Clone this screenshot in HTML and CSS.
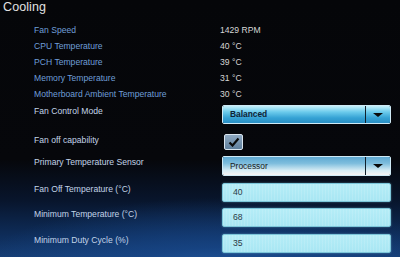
FILE: index.html
```html
<!DOCTYPE html>
<html>
<head>
<meta charset="utf-8">
<link rel="stylesheet" href="styles.css">
</head>
<body>
<div class="screen">
  <h1 class="title">Cooling</h1>
  <div class="form">
    <div class="lbl ro">Fan Speed</div><div class="val">1429 RPM</div>
    <div class="lbl ro">CPU Temperature</div><div class="val">40 °C</div>
    <div class="lbl ro">PCH Temperature</div><div class="val">39 °C</div>
    <div class="lbl ro">Memory Temperature</div><div class="val">31 °C</div>
    <div class="lbl ro">Motherboard Ambient Temperature</div><div class="val">30 °C</div>

    <div class="lbl ed">Fan Control Mode</div>
    <div class="ctl"><div class="select sel-a"><span class="sel-text">Balanced</span><span class="sel-btn"><span class="arrow"></span></span></div></div>

    <div class="lbl ed">Fan off capability</div>
    <div class="ctl"><div class="check"><svg width="12" height="10" viewBox="0 0 12 10"><path d="M1.5 5.5 L4.5 8.5 L10.5 1.5" fill="none" stroke="#0a0a0a" stroke-width="2.2"/></svg></div></div>

    <div class="lbl ed">Primary Temperature Sensor</div>
    <div class="ctl"><div class="select sel-b"><span class="sel-text">Processor</span><span class="sel-btn"><span class="arrow"></span></span></div></div>

    <div class="lbl ed">Fan Off Temperature (°C)</div>
    <div class="ctl"><div class="input">40</div></div>

    <div class="lbl ed">Minimum Temperature (°C)</div>
    <div class="ctl"><div class="input">68</div></div>

    <div class="lbl ed">Minimum Duty Cycle (%)</div>
    <div class="ctl"><div class="input">35</div></div>
  </div>
</div>
</body>
</html>
```

FILE: styles.css
```css
html, body {
  margin: 0;
  padding: 0;
}
body {
  width: 400px;
  height: 257px;
  overflow: hidden;
  font-family: "Liberation Sans", Arial, sans-serif;
  background:
    radial-gradient(ellipse 260px 90px at 55% 112%, rgba(40,100,175,0.95) 0%, rgba(25,75,145,0.6) 45%, rgba(10,30,70,0) 100%),
    linear-gradient(to bottom, #050609 0%, #06070b 62%, #08152c 78%, #0e2d5a 92%, #153c72 100%);
}
.screen {
  position: relative;
  width: 400px;
  height: 257px;
}
.title {
  margin: 0;
  padding: 0 0 0 3px;
  font-size: 12.5px;
  font-weight: normal;
  line-height: 15px;
  color: #e2e2e2;
  letter-spacing: 0.1px;
}
.form {
  display: grid;
  grid-template-columns: 188px 169px;
  grid-template-rows: 16px 16px 16px 16px 16px 29px 22px 27px 25px 26px 26px;
  padding-left: 34px;
  margin-top: 7px;
  font-size: 8.6px;
}
.lbl {
  line-height: 16px;
  white-space: nowrap;
}
.lbl.ro {
  color: #6f9ed8;
}
.lbl.ed {
  color: #c2d4e8;
  line-height: 12px;
  padding-top: 3px;
}
.val {
  color: #d6d6d6;
  line-height: 16px;
  margin-left: -2px;
}
.ctl {
  padding-top: 3px;
}
.select {
  display: flex;
  height: 19px;
  box-sizing: border-box;
  border: 1px solid #cfeaf6;
  border-radius: 2px;
  overflow: hidden;
}
.sel-text {
  flex: 1;
  padding-left: 7px;
  line-height: 17px;
  color: #0e2436;
  font-weight: bold;
  font-size: 8.4px;
}
.sel-btn {
  width: 24px;
  border-left: 1.5px solid #10202c;
  display: flex;
  align-items: center;
  justify-content: center;
}
.sel-a .sel-text, .sel-a .sel-btn {
  background: linear-gradient(to bottom, #c4f0fb 0%, #6ccbec 35%, #35a2d4 70%, #2a8fc4 100%);
}
.sel-b {
  height: 20px;
}
.sel-b .sel-text, .sel-b .sel-btn {
  background: linear-gradient(to bottom, #5fa9d2 0%, #7dbddd 35%, #d6ecf4 75%, #f6f2f2 100%);
}
.sel-b .sel-text {
  line-height: 18px;
  font-weight: normal;
  color: #1a1a22;
}
.arrow {
  width: 0;
  height: 0;
  border-left: 5px solid transparent;
  border-right: 5px solid transparent;
  border-top: 4px solid #0a0a0a;
}
.check {
  width: 19px;
  height: 16px;
  box-sizing: border-box;
  margin-left: 2px;
  border: 1.5px solid #d8e4ee;
  border-radius: 2px;
  background: linear-gradient(to bottom, #8ea8c0, #5f7f9c);
  display: flex;
  align-items: center;
  justify-content: center;
}
.input {
  height: 19px;
  box-sizing: border-box;
  border: 1px solid #7cc6da;
  border-radius: 2px;
  background:
    repeating-linear-gradient(to right, rgba(255,255,255,0.12) 0 1px, rgba(255,255,255,0) 1px 3px),
    linear-gradient(to bottom, #b5edf7, #a8e6f3);
  box-shadow: 0 0 2px rgba(150,220,240,0.5);
  color: #2a3a44;
  padding-left: 10px;
  line-height: 17px;
  font-size: 8.6px;
}
```
